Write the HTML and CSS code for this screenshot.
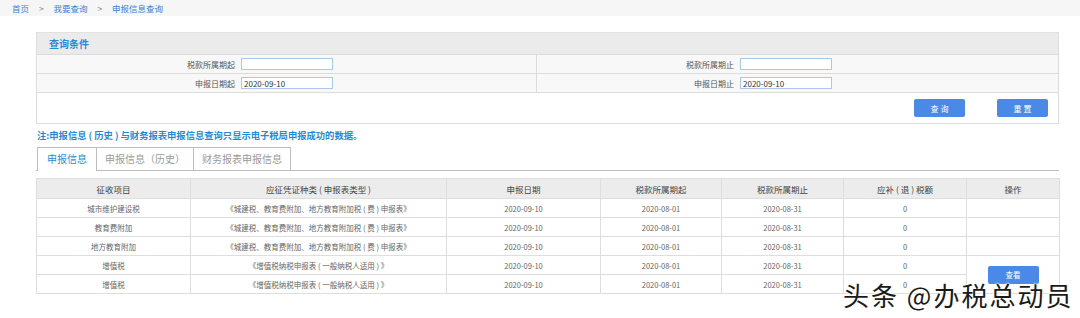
FILE: index.html
```html
<!DOCTYPE html>
<html lang="zh-CN">
<head>
  <meta charset="UTF-8">
  <title>申报信息查询</title>
  <link rel="stylesheet" href="styles.css">
</head>
<body>
  <div class="crumbs">
    <a href="#">首页</a>
    <span class="sep">&gt;</span>
    <a href="#">我要查询</a>
    <span class="sep">&gt;</span>
    <a href="#">申报信息查询</a>
  </div>

  <div class="main">
    <div class="query-panel">
      <div class="panel-title">查询条件</div>
      <table class="query-form">
        <tr>
          <td class="lbl lbl-left">税款所属期起</td>
          <td class="fld fld-left"><input type="text" value=""></td>
          <td class="lbl lbl-right">税款所属期止</td>
          <td class="fld"><input type="text" value=""></td>
        </tr>
        <tr>
          <td class="lbl lbl-left">申报日期起</td>
          <td class="fld fld-left"><input type="text" value="2020-09-10"></td>
          <td class="lbl lbl-right">申报日期止</td>
          <td class="fld"><input type="text" value="2020-09-10"></td>
        </tr>
      </table>
      <div class="panel-buttons">
        <button class="btn">查 询</button>
        <button class="btn">重 置</button>
      </div>
    </div>

    <p class="note">注:申报信息 ( 历史 ) 与财务报表申报信息查询只显示电子税局申报成功的数据。</p>

    <div class="tabs">
      <div class="tab active">申报信息</div>
      <div class="tab">申报信息（历史）</div>
      <div class="tab">财务报表申报信息</div>
    </div>

    <table class="result">
      <colgroup>
        <col class="c1"><col class="c2"><col class="c3"><col class="c4"><col class="c5"><col class="c6"><col class="c7">
      </colgroup>
      <thead>
        <tr>
          <th>征收项目</th>
          <th>应征凭证种类 ( 申报表类型 )</th>
          <th>申报日期</th>
          <th>税款所属期起</th>
          <th>税款所属期止</th>
          <th>应补 ( 退 ) 税额</th>
          <th>操作</th>
        </tr>
      </thead>
      <tbody>
        <tr>
          <td>城市维护建设税</td>
          <td>《城建税、教育费附加、地方教育附加税 ( 费 ) 申报表》</td>
          <td>2020-09-10</td>
          <td>2020-08-01</td>
          <td>2020-08-31</td>
          <td>0</td>
          <td></td>
        </tr>
        <tr>
          <td>教育费附加</td>
          <td>《城建税、教育费附加、地方教育附加税 ( 费 ) 申报表》</td>
          <td>2020-09-10</td>
          <td>2020-08-01</td>
          <td>2020-08-31</td>
          <td>0</td>
          <td></td>
        </tr>
        <tr>
          <td>地方教育附加</td>
          <td>《城建税、教育费附加、地方教育附加税 ( 费 ) 申报表》</td>
          <td>2020-09-10</td>
          <td>2020-08-01</td>
          <td>2020-08-31</td>
          <td>0</td>
          <td></td>
        </tr>
        <tr>
          <td>增值税</td>
          <td>《增值税纳税申报表 ( 一般纳税人适用 ) 》</td>
          <td>2020-09-10</td>
          <td>2020-08-01</td>
          <td>2020-08-31</td>
          <td>0</td>
          <td rowspan="2"><button class="btn btn-small">查看</button></td>
        </tr>
        <tr>
          <td>增值税</td>
          <td>《增值税纳税申报表 ( 一般纳税人适用 ) 》</td>
          <td>2020-09-10</td>
          <td>2020-08-01</td>
          <td>2020-08-31</td>
          <td>0</td>
        </tr>
      </tbody>
    </table>
  </div>

  <div class="watermark">头条 @办税总动员</div>
</body>
</html>
```

FILE: styles.css
```css
body {
  margin: 0;
  font-family: "Noto Sans CJK SC", "Noto Sans", sans-serif;
  background-color: #fff;
  color: #555;
  position: relative;
  height: 318px;
  overflow: hidden;
}

/* breadcrumb bar */
.crumbs {
  height: 16px;
  line-height: 16px;
  padding-left: 12px;
  background-color: #f6f6f6;
  font-size: 8.5px;
}

.crumbs a {
  color: #3b82d6;
  text-decoration: none;
}

.crumbs .sep {
  color: #888;
  margin: 0 8px;
}

.main {
  padding: 16px 21px 0 36px;
}

/* query panel */
.query-panel {
  border: 1px solid #dcdcdc;
  border-top: none;
}

.panel-title {
  height: 21px;
  line-height: 21px;
  padding-left: 12px;
  background-color: #ebebeb;
  border-top: 1px solid #e2e2e2;
  border-bottom: 1px solid #dcdcdc;
  color: #2b8ad6;
  font-size: 10px;
  font-weight: bold;
}

.query-form {
  width: 100%;
  border-collapse: collapse;
  font-size: 8px;
}

.query-form td {
  height: 18px;
  padding: 0;
  border-bottom: 1px solid #dcdcdc;
  background-color: #f8f8f8;
}

.query-form .lbl {
  text-align: right;
  padding-right: 5px;
  color: #555;
}

.query-form .lbl-left {
  width: 198px;
}

.query-form .lbl-right {
  width: 197px;
}

.query-form .fld-left {
  width: 295px;
  border-right: 1px solid #dcdcdc;
}

.query-form td.fld {
  padding-left: 1px;
}

.query-form input {
  display: block;
  width: 92px;
  height: 12px;
  box-sizing: border-box;
  border: 1px solid #a9c9ea;
  padding: 0 2px;
  font-family: "Noto Sans CJK SC", sans-serif;
  font-size: 8px;
  color: #333;
  background-color: #fff;
  outline: none;
}

.panel-buttons {
  height: 30px;
  display: flex;
  justify-content: flex-end;
  align-items: flex-start;
  gap: 32px;
  padding: 6px 10px 0 0;
  box-sizing: border-box;
}

.btn {
  width: 51px;
  height: 18px;
  border: none;
  border-radius: 2px;
  background-color: #4a89e6;
  color: #fff;
  font-family: "Noto Sans CJK SC", sans-serif;
  font-size: 8px;
  padding: 0;
  cursor: pointer;
}

/* note line */
.note {
  margin: 4px 0 0 1px;
  height: 14px;
  line-height: 14px;
  color: #1f8ad8;
  font-size: 9.3px;
  font-weight: bold;
}

/* tabs */
.tabs {
  display: flex;
  margin-top: 5px;
  padding-left: 1px;
  border-bottom: 1px solid #bdbdbd;
  height: 23px;
}

.tab {
  height: 23px;
  line-height: 22px;
  box-sizing: border-box;
  padding: 0 8px;
  border: 1px solid #bdbdbd;
  border-left: none;
  border-bottom: none;
  color: #9a9a9a;
  font-size: 10px;
  background-color: #fff;
}

.tab:first-child {
  border-left: 1px solid #bdbdbd;
}

.tab.active {
  height: 24px;
  color: #2b8ad6;
  padding: 0 9px;
}

/* result table */
.result {
  width: 100%;
  margin-top: 7px;
  border-collapse: collapse;
  table-layout: fixed;
}

.result .c1 { width: 154px; }
.result .c2 { width: 256px; }
.result .c3 { width: 154px; }
.result .c4 { width: 121px; }
.result .c5 { width: 122px; }
.result .c6 { width: 123px; }
.result .c7 { width: 93px; }

.result th,
.result td {
  border: 1px solid #dedede;
  padding: 0;
  text-align: center;
  white-space: nowrap;
}

.result th {
  height: 19px;
  background-color: #ececec;
  color: #444;
  font-size: 8.5px;
  font-weight: normal;
}

.result td {
  height: 18px;
  color: #666;
  font-size: 7.5px;
}

.btn-small {
  width: 51px;
  height: 18px;
  font-size: 7.5px;
}

/* site watermark over the page */
.watermark {
  position: absolute;
  left: 843px;
  top: 279px;
  font-size: 26px;
  line-height: 32px;
  color: #1a1a1a;
  letter-spacing: 2px;
  text-shadow: 0 0 2px #fff, 0 0 2px #fff, 0 0 3px #fff;
}
```
